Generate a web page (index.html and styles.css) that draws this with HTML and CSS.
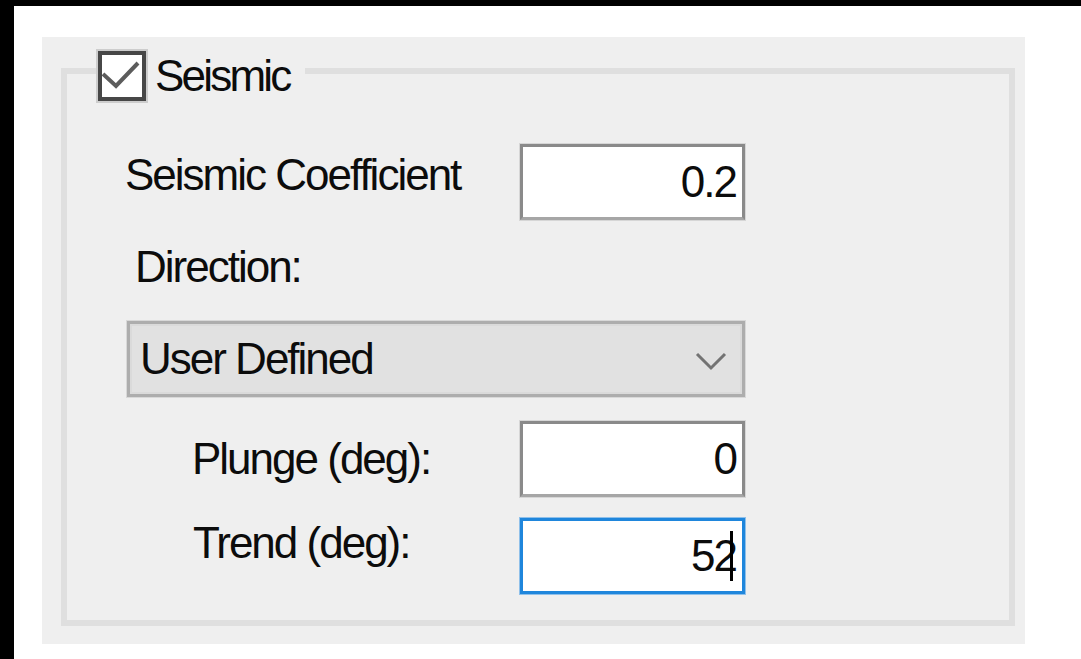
FILE: index.html
```html
<!DOCTYPE html>
<html lang="en">
<head>
<meta charset="utf-8">
<title>Seismic</title>
<link rel="stylesheet" href="styles.css">
</head>
<body>
<div class="frame">
  <div class="panel">
    <fieldset class="group">
      <legend class="group-legend">
        <span class="legend-inner">
          <span class="checkbox">
            <svg viewBox="0 0 40 42" width="40" height="42" aria-hidden="true">
              <polyline points="1,19 14,31 36,8" fill="none" stroke="#5c5c5c" stroke-width="4" stroke-linejoin="miter"/>
            </svg>
          </span>
          <span class="text legend-text">Seismic</span>
        </span>
      </legend>

      <div class="rows">
        <div class="row row-coef">
          <span class="text label">Seismic Coefficient</span>
          <div class="field"><span class="text">0.2</span></div>
        </div>

        <span class="text label label-direction">Direction:</span>

        <div class="combo">
          <span class="text">User Defined</span>
          <svg class="chevron" viewBox="0 0 32 20" width="32" height="20" aria-hidden="true">
            <polyline points="2,3 16,17 30,3" fill="none" stroke="#737373" stroke-width="3"/>
          </svg>
        </div>

        <div class="row row-plunge">
          <span class="text label">Plunge (deg):</span>
          <div class="field"><span class="text">0</span></div>
        </div>

        <div class="row row-trend">
          <span class="text label">Trend (deg):</span>
          <div class="field field-focus"><span class="text">52</span><span class="caret"></span></div>
        </div>
      </div>
    </fieldset>
  </div>
</div>
</body>
</html>
```

FILE: styles.css
```css
html, body {
  margin: 0;
  background: #ffffff;
}

.frame {
  box-sizing: border-box;
  height: 659px;
  border-top: 6px solid #000;
  border-left: 14px solid #000;
  padding: 31px 56px 15px 28px;
}

.panel {
  box-sizing: border-box;
  height: 100%;
  background: #efefef;
  display: flex;
  flex-direction: column;
  padding: 4px 10px 18px 19px;
}

.text {
  font-family: "Liberation Sans", Arial, sans-serif;
  font-size: 44px;
  line-height: 50px;
  letter-spacing: -2px;
  color: #0c0c0c;
  white-space: nowrap;
}

/* group box */
.group {
  flex: 1;
  margin: 0;
  padding: 0;
  min-inline-size: 0;
  border: 6px solid #dfdfdf;
}

.group-legend {
  padding: 10px 16px 0 0;
  margin-left: 31px;
}

.legend-inner {
  display: flex;
  align-items: center;
  gap: 9px;
}

.legend-text {
  letter-spacing: -2.8px;
}

.checkbox {
  box-sizing: border-box;
  width: 48px;
  height: 50px;
  border: 4px solid #474747;
  background: #fff;
  box-shadow: 0 0 0 2px #cdcdcd;
  display: flex;
  align-items: center;
  justify-content: center;
}

.checkbox svg {
  display: block;
}

/* form rows */
.rows {
  display: flex;
  flex-direction: column;
  padding-top: 43px;
}

.row {
  display: grid;
  grid-template-columns: 453px 225px;
}

.row-coef .label {
  margin: 6px 0 0 58px;
  align-self: start;
}

.row-plunge {
  margin-top: 24px;
}

.row-plunge .label {
  margin-left: 125px;
  align-self: center;
}

.row-trend {
  margin-top: 21px;
}

.row-trend .label {
  margin-left: 126px;
  align-self: start;
}

.label-direction {
  margin: 22px 0 0 68px;
}

.field {
  box-sizing: border-box;
  width: 225px;
  height: 76px;
  background: #fff;
  border: 3px solid #8a8a8a;
  border-bottom-color: #a6a6a6;
  box-shadow: 0 0 0 1px #d6d6d6;
  display: flex;
  align-items: center;
  justify-content: flex-end;
  padding-right: 6px;
}

.field-focus {
  border-color: #1f86dc;
  box-shadow: 0 0 0 1px #8fc0ea;
}

.caret {
  width: 3px;
  height: 50px;
  background: #000;
  margin-left: -6px;
  margin-right: 3px;
}

.combo {
  box-sizing: border-box;
  width: 618px;
  height: 76px;
  margin: 29px 0 0 60px;
  background: #e1e1e1;
  border: 3px solid #adadad;
  box-shadow: inset 0 0 0 2px #dadada, 0 0 0 1px #d8d8d8;
  display: flex;
  align-items: center;
  justify-content: space-between;
  padding: 0 15px 0 10px;
}

.chevron {
  display: block;
  margin-top: 4px;
}
```
